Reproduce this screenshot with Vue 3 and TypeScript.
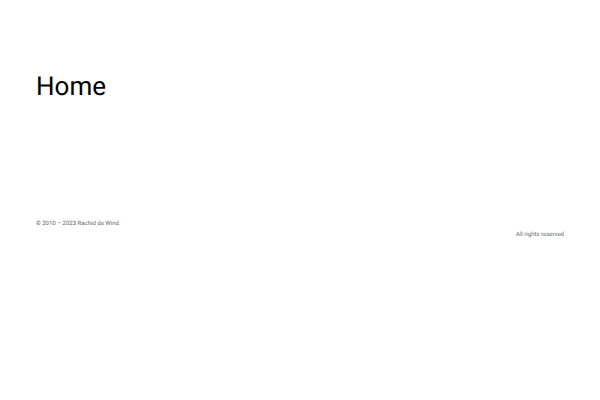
<script setup lang="ts">
const title: string = 'Home'
const owner: string = 'Rachid de Wind.'
</script>

<template>
  <div class="page">
    <main class="content">
      <h1>{{ title }}</h1>
    </main>
    <footer class="footer">
      <p>© 2010 – 2023 {{ owner }}</p>
      <p class="rights">All rights reserved</p>
    </footer>
  </div>
</template>

<style>
body {
  margin: 0;
  background: #fff;
}
</style>

<style scoped>
.page {
  padding: 72px 36px;
  font-family: Roboto, sans-serif;
  color: #000;
  text-rendering: geometricPrecision;
}

.content {
  padding-bottom: 116px;
}

h1 {
  margin: 0;
  font-size: 26px;
  line-height: 30px;
  font-weight: 400;
}

.footer {
  color: #666;
  font-size: 6px;
  line-height: 11px;
}

.footer p {
  margin: 0;
}

.footer .rights {
  text-align: right;
}
</style>
